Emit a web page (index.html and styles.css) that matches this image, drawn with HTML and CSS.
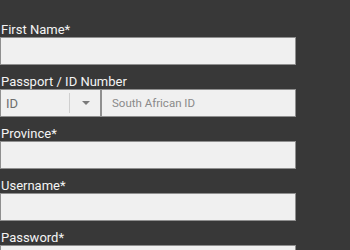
FILE: index.html
```html
<!DOCTYPE html>
<html>
<head>
<meta charset="utf-8">
<link rel="stylesheet" href="styles.css">
</head>
<body>
<form class="form">
  <div class="field">
    <label class="label">First Name*</label>
    <div class="box"></div>
  </div>
  <div class="field">
    <label class="label">Passport / ID Number</label>
    <div class="idrow">
      <div class="select">
        <span class="select-value">ID</span>
        <span class="select-sep"></span>
        <span class="select-arrow"></span>
      </div>
      <div class="box idinput"><span class="placeholder">South African ID</span></div>
    </div>
  </div>
  <div class="field">
    <label class="label">Province*</label>
    <div class="box"></div>
  </div>
  <div class="field">
    <label class="label">Username*</label>
    <div class="box"></div>
  </div>
  <div class="field">
    <label class="label">Password*</label>
    <div class="box"></div>
  </div>
</form>
</body>
</html>
```
FILE: styles.css
```css
html, body {
  margin: 0;
  padding: 0;
  background: #383838;
  height: 100%;
  overflow: hidden;
}
body {
  font-family: Roboto, "Liberation Sans", sans-serif;
}
.form {
  width: 296px;
  padding-top: 22px;
}
.field {
  margin-bottom: 9px;
}
.label {
  display: block;
  color: #f4f4f4;
  font-size: 13px;
  line-height: 15px;
  padding-left: 1px;
}
.box {
  height: 28px;
  box-sizing: border-box;
  background: #f0f0f0;
  border: 1px solid #8f8f8f;
}
.idrow {
  display: flex;
  height: 28px;
}
.select {
  width: 101px;
  box-sizing: border-box;
  background: #f0f0f0;
  border: 1px solid #8f8f8f;
  display: flex;
  align-items: center;
}
.select-value {
  color: #6e6e6e;
  font-size: 13px;
  padding-left: 5px;
  width: 63px;
}
.select-sep {
  width: 1px;
  height: 20px;
  background: #cfcfcf;
}
.select-arrow {
  margin-left: 12px;
  width: 0;
  height: 0;
  border-left: 4px solid transparent;
  border-right: 4px solid transparent;
  border-top: 4px solid #7a7a7a;
}
.idinput {
  flex: 1;
  display: flex;
  align-items: center;
  padding-left: 10px;
}
.placeholder {
  color: #8a8a8a;
  font-size: 11.5px;
}
```
